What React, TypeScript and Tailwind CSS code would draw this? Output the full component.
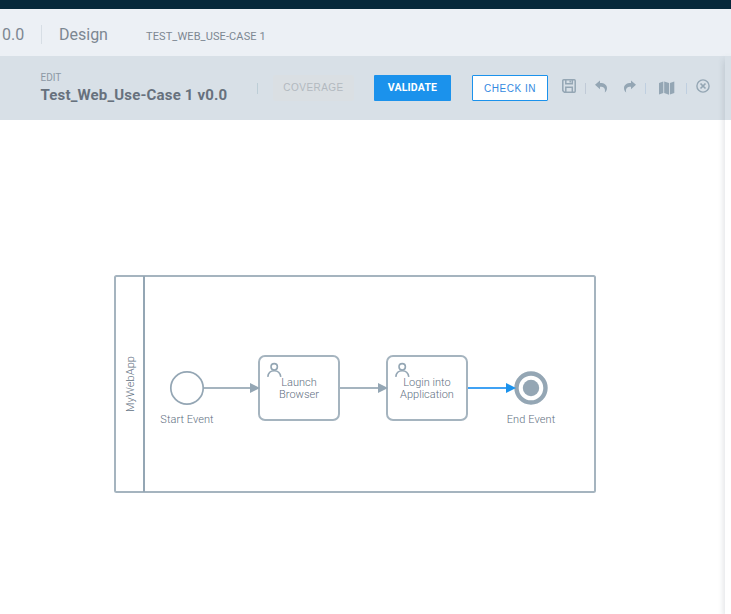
import React from 'react';

function Divider({ className = '' }: { className?: string }) {
  return <div className={`w-px shrink-0 ${className}`} />;
}

function SaveIcon() {
  return (
    <svg width="14" height="14" viewBox="0 0 14 14" fill="none" stroke="#94a6b4" strokeWidth="1.5">
      <path d="M1.7 .8H12.3Q13.2 .8 13.2 1.7V12.3Q13.2 13.2 12.3 13.2H2.4L.8 11.6V1.7Q.8 .8 1.7 .8Z" />
      <path d="M3.8 1V4.8H10.3V1M3.8 13V8.2H10.3V13M8.2 1.5V3.5" />
    </svg>
  );
}

function ArrowIcon({ flip = false }: { flip?: boolean }) {
  return (
    <svg width="13" height="13" viewBox="0 0 13 13" fill="#94a6b4" className={flip ? '-scale-x-100' : ''}>
      <path d="M0 4.8L5 .4V3C9.6 3 12 5 12 8.3C12 10.2 11 11.6 9.8 12.6C10.6 8.6 9.2 6.8 5 6.8V9.3Z" />
    </svg>
  );
}

function MapIcon() {
  return (
    <svg width="16" height="14" viewBox="0 0 16 14" fill="#94a6b4">
      <path d="M0 2L4.3 .4V12L0 13.6ZM5.2 .4L10 2.1V13.7L5.2 12ZM10.9 2L15.3 .4V12L10.9 13.6Z" />
    </svg>
  );
}

function CloseIcon() {
  return (
    <svg width="14" height="14" viewBox="0 0 14 14" fill="none" stroke="#94a6b4" strokeWidth="1.4">
      <circle cx="7" cy="7" r="6.1" />
      <path d="M4.5 4.5L9.5 9.5M9.5 4.5L4.5 9.5" strokeWidth="1.7" />
    </svg>
  );
}

function UserTask({ x, lines }: { x: number; lines: string[] }) {
  return (
    <g transform={`translate(${x} 236)`}>
      <rect width="80" height="64" rx="6" fill="white" stroke="#a5b4bf" strokeWidth="2" />
      <g fill="none" stroke="#94a6b4" strokeWidth="1.6">
        <circle cx="15.2" cy="10.8" r="3.2" />
        <path d="M8.8 20.8C9.2 17.2 11.5 14.8 15.2 14.8S21.2 17.2 21.8 20.8" />
      </g>
      <text x="40" y="30" textAnchor="middle">{lines[0]}</text>
      <text x="40" y="42" textAnchor="middle">{lines[1]}</text>
    </g>
  );
}

function Flow({ from, to, line = '#a5b4bf', head = '#94a6b4' }: { from: number; to: number; line?: string; head?: string }) {
  return (
    <g>
      <path d={`M${from} 268H${to - 7}`} stroke={line} strokeWidth="2" />
      <path d={`M${to - 10} 263L${to} 268L${to - 10} 273Z`} fill={head} />
    </g>
  );
}

function Diagram() {
  return (
    <svg width="725" height="494" viewBox="0 0 725 494" className="block font-['Roboto',sans-serif] text-[11px] font-light" fill="#5f7082">
      <rect x="115" y="156" width="480" height="216" rx="1.5" fill="white" stroke="#a5b4bf" strokeWidth="2" />
      <path d="M144 156V372" stroke="#94a6b4" strokeWidth="2" />
      <text transform="translate(134 264) rotate(-90)" textAnchor="middle" className="tracking-[0.1px]">MyWebApp</text>
      <circle cx="187" cy="268" r="16.2" fill="white" stroke="#94a6b4" strokeWidth="1.7" />
      <text x="187" y="303" textAnchor="middle" className="tracking-[0.05px]">Start Event</text>
      <UserTask x={259} lines={['Launch', 'Browser']} />
      <UserTask x={387} lines={['Login into', 'Application']} />
      <circle cx="531" cy="268" r="14.5" fill="white" stroke="#94a6b4" strokeWidth="4.4" />
      <circle cx="531" cy="268" r="8.2" fill="#94a6b4" />
      <text x="531" y="303" textAnchor="middle" className="tracking-[0.1px]">End Event</text>
      <Flow from={204} to={260} />
      <Flow from={340} to={388} />
      <Flow from={468} to={516} line="#40a2f4" head="#1b92ec" />
    </svg>
  );
}

export default function App() {
  return (
    <div className="flex h-[614px] w-[731px] flex-col overflow-hidden bg-white font-['Roboto',sans-serif]">
      <div className="h-[9px] shrink-0 bg-[#06283a]" />
      <nav className="flex h-[47px] shrink-0 items-center bg-[#ecf0f5] text-[#7c8792]">
        <span className="w-[41px] pt-1 pl-0.5 text-base leading-6">0.0</span>
        <Divider className="mt-1 h-[19px] bg-[#d7dee5]" />
        <span className="w-[104px] pt-1 pl-[17px] text-base leading-6">Design</span>
        <span className="pt-[8px] text-[11px] leading-4 tracking-[0.11px]">TEST_WEB_USE-CASE 1</span>
      </nav>
      <div className="flex min-h-0 flex-1">
        <main className="w-[725px] shrink-0">
          <header className="flex h-16 items-start bg-[#d8e0e7] pl-10">
            <div className="w-[217px] pt-4">
              <div className="pl-[0.5px] text-[10px] leading-[11px] text-[#8c98a4]">EDIT</div>
              <h1 className="pl-[0.5px] text-[15px] leading-6 font-bold tracking-[0.17px] text-[#67717d]">Test_Web_Use-Case 1 v0.0</h1>
            </div>
            <Divider className="mt-[27px] h-[11px] bg-[#bdced7]" />
            <button className="mt-[19px] ml-[15px] h-[26px] w-[81px] rounded-[2px] bg-[#dadfe3] pb-0.5 font-['Liberation_Sans',sans-serif] text-[10px] tracking-[0.45px] text-[#b2b9bf]">
              COVERAGE
            </button>
            <button className="mt-[19px] ml-5 h-[26px] w-[77px] rounded-[1px] bg-[#1b92ec] text-[10.5px] font-bold tracking-[0.2px] text-white">
              VALIDATE
            </button>
            <button className="mt-[19px] ml-[21px] h-[26px] w-[76px] rounded-[1px] border border-[#1b92ec] bg-white font-['Liberation_Sans',sans-serif] text-[10px] tracking-[0.5px] text-[#3389df]">
              CHECK IN
            </button>
            <button aria-label="Save" className="mt-[23px] ml-[14px]"><SaveIcon /></button>
            <Divider className="mt-[27px] ml-[9px] h-[11px] bg-[#c0cad7]" />
            <button aria-label="Undo" className="mt-6 ml-[9px]"><ArrowIcon /></button>
            <button aria-label="Redo" className="mt-6 ml-[15px]"><ArrowIcon flip /></button>
            <Divider className="mt-[27px] ml-[9px] h-[11px] bg-[#bfcfe0]" />
            <button aria-label="Map" className="mt-[25px] ml-[13px]"><MapIcon /></button>
            <Divider className="mt-[27px] ml-[11px] h-[11px] bg-[#bfcfe0]" />
            <button aria-label="Close" className="mt-[23px] ml-[9px]"><CloseIcon /></button>
          </header>
          <Diagram />
        </main>
        <aside className="relative w-1.5 shrink-0 bg-white shadow-[0_4px_7px_rgba(70,85,100,0.24)]">
          <div className="h-16 bg-[#d8e0e7]" />
        </aside>
      </div>
    </div>
  );
}
